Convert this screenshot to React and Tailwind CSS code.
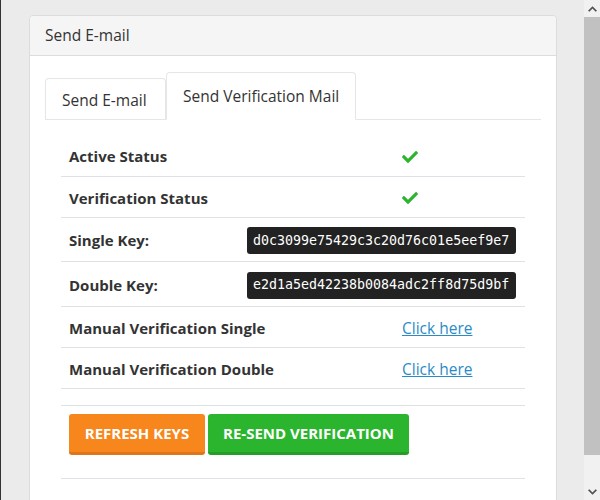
import React from "react";

const rows = [
  { label: "Active Status", kind: "check", h: "h-[42px]" },
  { label: "Verification Status", kind: "check", h: "h-[41px]" },
  { label: "Single Key:", kind: "code", value: "d0c3099e75429c3c20d76c01e5eef9e7", h: "h-[44px]" },
  { label: "Double Key:", kind: "code", value: "e2d1a5ed42238b0084adc2ff8d75d9bf", h: "h-[45px]" },
  { label: "Manual Verification Single", kind: "link", h: "h-[41px]" },
  { label: "Manual Verification Double", kind: "link", h: "h-[41px]" },
];

function Check() {
  return (
    <svg viewBox="0 0 512 512" className="w-[16px] h-[16px]" fill="#2db42f">
      <path d="M173.898 439.404l-166.4-166.4c-9.997-9.997-9.997-26.206 0-36.204l36.203-36.204c9.997-9.998 26.207-9.998 36.204 0L192 312.69 432.095 72.596c9.997-9.997 26.207-9.997 36.204 0l36.203 36.204c9.997 9.997 9.997 26.206 0 36.204l-294.4 294.401c-9.998 9.997-26.207 9.997-36.204-.001z" />
    </svg>
  );
}

function Scrollbar() {
  return (
    <div className="w-[16px] h-[500px] flex flex-col bg-[#f1f1f1] shrink-0">
      <div className="h-[17px] flex items-center justify-center">
        <svg viewBox="0 0 10 6" className="w-[9px] h-[6px]" fill="#505050">
          <path d="M5 0 L10 5 L8.5 6 L5 2.5 L1.5 6 L0 5 Z" />
        </svg>
      </div>
      <div className="h-[438px] bg-[#c1c1c1]" />
      <div className="flex-1" />
      <div className="h-[17px] flex items-center justify-center">
        <svg viewBox="0 0 10 6" className="w-[9px] h-[6px]" fill="#505050">
          <path d="M5 6 L10 1 L8.5 0 L5 3.5 L1.5 0 L0 1 Z" />
        </svg>
      </div>
    </div>
  );
}

export default function App() {
  return (
    <div
      className="flex w-[600px] h-[500px] overflow-hidden bg-[#ebebeb] border-l border-[#333] text-[#333]"
      style={{ fontFamily: "'Open Sans', Lato, sans-serif" }}
    >
      <div className="flex-1 pl-[28px] pr-[27px] pt-[15px]">
        <div className="bg-white border border-[#dcdcdc] rounded-t-[4px] h-[600px]">
          <div className="h-[40px] bg-[#f5f5f5] border-b border-[#dcdcdc] px-[15px] flex items-center text-[15.5px] rounded-t-[4px]">
            Send E-mail
          </div>
          <div className="px-[15px] pt-[16px]">
            <div className="flex items-end border-b border-[#e6e6e6]">
              <div className="h-[41px] w-[121px] border border-b-0 border-[#e6e6e6] rounded-t-[4px] pl-[16px] flex items-center pt-[3px] text-[15.5px] whitespace-nowrap">
                Send E-mail
              </div>
              <div className="h-[48px] w-[190px] border border-[#e6e6e6] border-b-white -mb-px rounded-t-[4px] pl-[16px] flex items-center pt-[1px] text-[15.5px] bg-white whitespace-nowrap">
                Send Verification Mail
              </div>
            </div>
            <div className="px-[16px] pt-[15px]">
              {rows.map((r) => (
                <div
                  key={r.label}
                  className={`${r.h} flex items-center border-b border-[#dee2e6] pt-[2px]`}
                >
                  <div className="w-[186px] pl-[8px] font-bold text-[15px] shrink-0 whitespace-nowrap">
                    {r.label}
                  </div>
                  {r.kind === "check" && (
                    <div className="pl-[155px] flex items-center">
                      <Check />
                    </div>
                  )}
                  {r.kind === "code" && (
                    <div
                      className="w-[269px] h-[27px] bg-[#222] text-white rounded-[3px] px-[6px] flex items-center text-[13.3px]"
                      style={{ fontFamily: "'DejaVu Sans Mono', monospace" }}
                    >
                      {r.value}
                    </div>
                  )}
                  {r.kind === "link" && (
                    <div className="pl-[155px]">
                      <a href="#" className="text-[#2a8cc6] underline text-[15.5px]">
                        Click here
                      </a>
                    </div>
                  )}
                </div>
              ))}
              <div className="h-[17px] border-b border-[#dee2e6]" />
              <div className="h-[73px] border-b border-[#dee2e6] pl-[8px] pt-[8px] flex gap-[3px] items-start">
                <button className="h-[41px] w-[136px] bg-[#f7861c] border-b-[3px] border-[#df761a] rounded-[3px] text-white font-bold text-[15px] whitespace-nowrap">
                  REFRESH KEYS
                </button>
                <button className="h-[41px] w-[201px] bg-[#2bb52e] border-b-[3px] border-[#239f27] rounded-[3px] text-white font-bold text-[15px] whitespace-nowrap">
                  RE-SEND VERIFICATION
                </button>
              </div>
            </div>
          </div>
        </div>
      </div>
      <Scrollbar />
    </div>
  );
}
